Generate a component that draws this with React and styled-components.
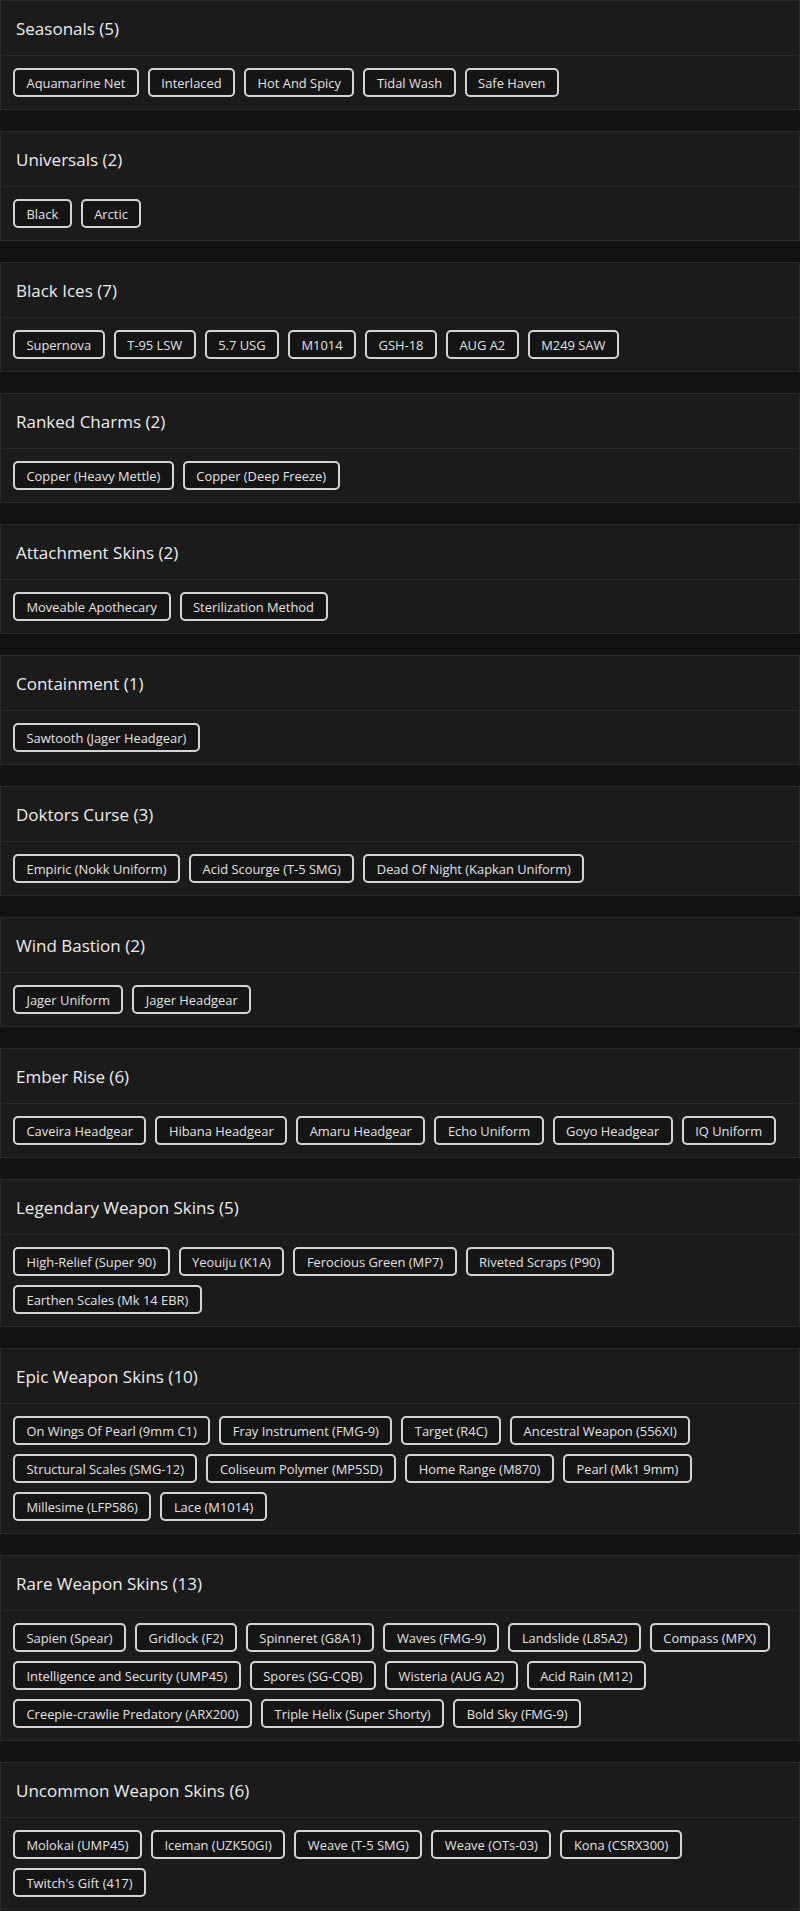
import React from "react";
import styled, { createGlobalStyle } from "styled-components";

const Global = createGlobalStyle`
  html, body { margin: 0; padding: 0; background: #121212; }
  body { font-family: "Open Sans", "Noto Sans", sans-serif; }
`;

const data = [
  ["Seasonals", ["Aquamarine Net", "Interlaced", "Hot And Spicy", "Tidal Wash", "Safe Haven"]],
  ["Universals", ["Black", "Arctic"]],
  ["Black Ices", ["Supernova", "T-95 LSW", "5.7 USG", "M1014", "GSH-18", "AUG A2", "M249 SAW"]],
  ["Ranked Charms", ["Copper (Heavy Mettle)", "Copper (Deep Freeze)"]],
  ["Attachment Skins", ["Moveable Apothecary", "Sterilization Method"]],
  ["Containment", ["Sawtooth (Jager Headgear)"]],
  ["Doktors Curse", ["Empiric (Nokk Uniform)", "Acid Scourge (T-5 SMG)", "Dead Of Night (Kapkan Uniform)"]],
  ["Wind Bastion", ["Jager Uniform", "Jager Headgear"]],
  ["Ember Rise", ["Caveira Headgear", "Hibana Headgear", "Amaru Headgear", "Echo Uniform", "Goyo Headgear", "IQ Uniform"]],
  ["Legendary Weapon Skins", ["High-Relief (Super 90)", "Yeouiju (K1A)", "Ferocious Green (MP7)", "Riveted Scraps (P90)", "Earthen Scales (Mk 14 EBR)"]],
  ["Epic Weapon Skins", ["On Wings Of Pearl (9mm C1)", "Fray Instrument (FMG-9)", "Target (R4C)", "Ancestral Weapon (556XI)", "Structural Scales (SMG-12)", "Coliseum Polymer (MP5SD)", "Home Range (M870)", "Pearl (Mk1 9mm)", "Millesime (LFP586)", "Lace (M1014)"]],
  ["Rare Weapon Skins", ["Sapien (Spear)", "Gridlock (F2)", "Spinneret (G8A1)", "Waves (FMG-9)", "Landslide (L85A2)", "Compass (MPX)", "Intelligence and Security (UMP45)", "Spores (SG-CQB)", "Wisteria (AUG A2)", "Acid Rain (M12)", "Creepie-crawlie Predatory (ARX200)", "Triple Helix (Super Shorty)", "Bold Sky (FMG-9)"]],
  ["Uncommon Weapon Skins", ["Molokai (UMP45)", "Iceman (UZK50GI)", "Weave (T-5 SMG)", "Weave (OTs-03)", "Kona (CSRX300)", "Twitch's Gift (417)"]],
];

const Page = styled.div`
  display: flex;
  flex-direction: column;
  gap: 21px;
  background: #121212;
`;

const Card = styled.section`
  background: #1b1b1b;
  border: 1px solid #2a2a2a;
`;

const Header = styled.h2`
  margin: 0;
  height: 54px;
  display: flex;
  align-items: center;
  padding: 0 15px;
  font-size: 17px;
  font-weight: 500;
  color: #ececec;
  border-bottom: 1px solid #2c2c2c;
`;

const Tags = styled.div`
  display: flex;
  flex-wrap: wrap;
  gap: 9px;
  padding: 12px;
`;

const Tag = styled.span`
  box-sizing: border-box;
  height: 29px;
  display: inline-flex;
  align-items: center;
  padding: 0 11.5px;
  border: 2px solid #d4d4d4;
  border-radius: 5px;
  background: #151515;
  color: #e2e2e2;
  font-size: 12.9px;
  white-space: nowrap;
`;

export default function App() {
  return (
    <>
      <Global />
      <Page>
        {data.map(([title, items]) => (
          <Card key={title}>
            <Header>{title} ({items.length})</Header>
            <Tags>
              {items.map((t) => (
                <Tag key={t}>{t}</Tag>
              ))}
            </Tags>
          </Card>
        ))}
      </Page>
    </>
  );
}
